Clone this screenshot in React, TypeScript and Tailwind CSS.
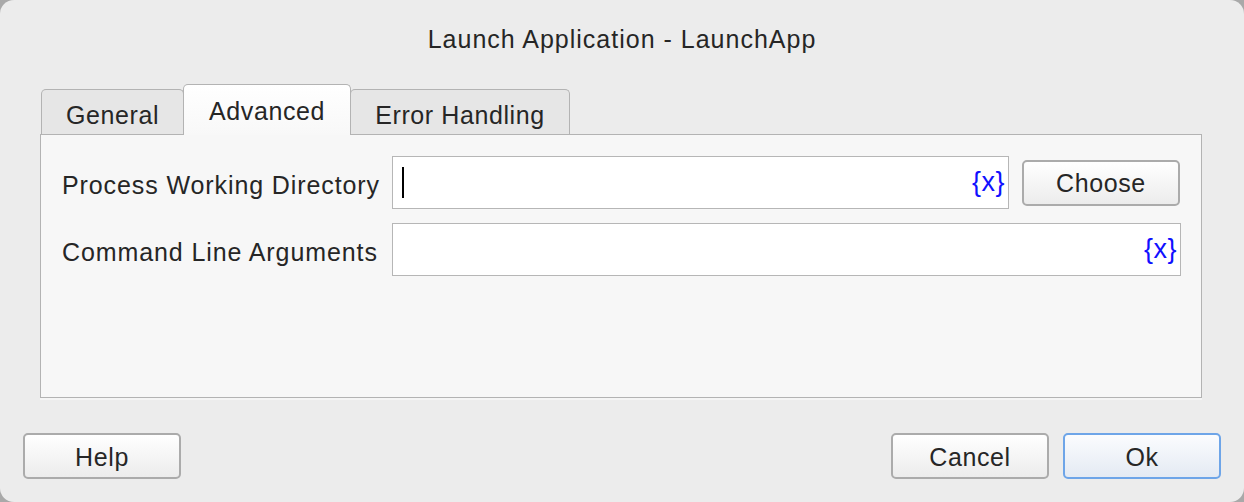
import { ReactNode } from 'react';

const font = { fontFamily: '"Liberation Sans", Arial, sans-serif' };

function Tab({ label, active, width }: { label: string; active?: boolean; width: string }) {
  return (
    <div
      className={
        active
          ? `relative z-10 -ml-px flex h-[51px] items-start justify-center rounded-t-[5px] border border-b-0 border-[#b3b3b3] bg-gradient-to-b from-white to-[#f8f8f8] pt-[11px] ${width}`
          : `-ml-px flex h-[46px] items-start justify-center rounded-t-[5px] border border-b-0 border-[#b3b3b3] bg-[#e6e6e6] pt-[10px] ${width}`
      }
    >
      <span className="text-[25px] leading-[30px] tracking-[0.6px] text-[#262626]">{label}</span>
    </div>
  );
}

function Btn({ children, primary }: { children: ReactNode; primary?: boolean }) {
  return (
    <button
      className={
        primary
          ? 'flex h-[46px] w-[158px] items-center justify-center rounded-[5px] border-2 border-[#6ea5e8] bg-gradient-to-b from-[#fbfcfe] to-[#e4eaf3] pt-[3px] text-[25px] tracking-[0.6px] text-[#262626]'
          : 'flex h-[46px] w-[158px] items-center justify-center rounded-[5px] border-2 border-[#ababab] bg-gradient-to-b from-white to-[#ececec] pt-[3px] text-[25px] tracking-[0.6px] text-[#262626]'
      }
    >
      {children}
    </button>
  );
}

function VarField({ width, caret }: { width: string; caret?: boolean }) {
  return (
    <div className={`flex h-[53px] items-center border border-[#b6b6b6] bg-white pr-[3px] ${width}`}>
      <div className="flex-1 pl-[9px]">{caret && <div className="h-[31px] w-[2px] bg-black" />}</div>
      <span className="text-[27px] leading-none tracking-[0.5px] text-[#1010ff]">{'{x}'}</span>
    </div>
  );
}

export default function App() {
  return (
    <div className="h-[502px] w-[1244px] bg-[#a9a9a9]" style={font}>
      <div className="flex h-[502px] w-[1244px] flex-col rounded-[14px] bg-[#ececec]">
        <div className="flex h-[84px] justify-center pt-[23px]">
          <span className="text-[25px] leading-[32px] tracking-[1px] text-[#262626]">Launch Application - LaunchApp</span>
        </div>

        <div className="flex items-end pl-[42px]">
          <Tab label="General" width="w-[143px]" />
          <Tab label="Advanced" width="w-[168px]" active />
          <Tab label="Error Handling" width="w-[220px]" />
        </div>

        <div className="-mt-px ml-[40px] mr-[42px] h-[264px] border border-[#b3b3b3] bg-[#f7f7f7] pl-[21px] pr-[20px] pt-[21px] shadow-[0_2px_0_#f5f5f5]">
          <div className="flex flex-col gap-[14px]">
            <div className="flex items-center">
              <span className="w-[330px] pt-[6px] text-[25px] tracking-[0.9px] text-[#262626]">Process Working Directory</span>
              <VarField width="w-[617px]" caret />
              <div className="ml-[13px]">
                <Btn>Choose</Btn>
              </div>
            </div>
            <div className="flex items-center">
              <span className="w-[330px] pt-[6px] text-[25px] tracking-[0.9px] text-[#262626]">Command Line Arguments</span>
              <VarField width="w-[790px]" />
            </div>
          </div>
        </div>

        <div className="mt-[35px] flex items-center px-[23px]">
          <Btn>Help</Btn>
          <div className="flex-1" />
          <div className="flex gap-[14px]">
            <Btn>Cancel</Btn>
            <Btn primary>Ok</Btn>
          </div>
        </div>
      </div>
    </div>
  );
}
